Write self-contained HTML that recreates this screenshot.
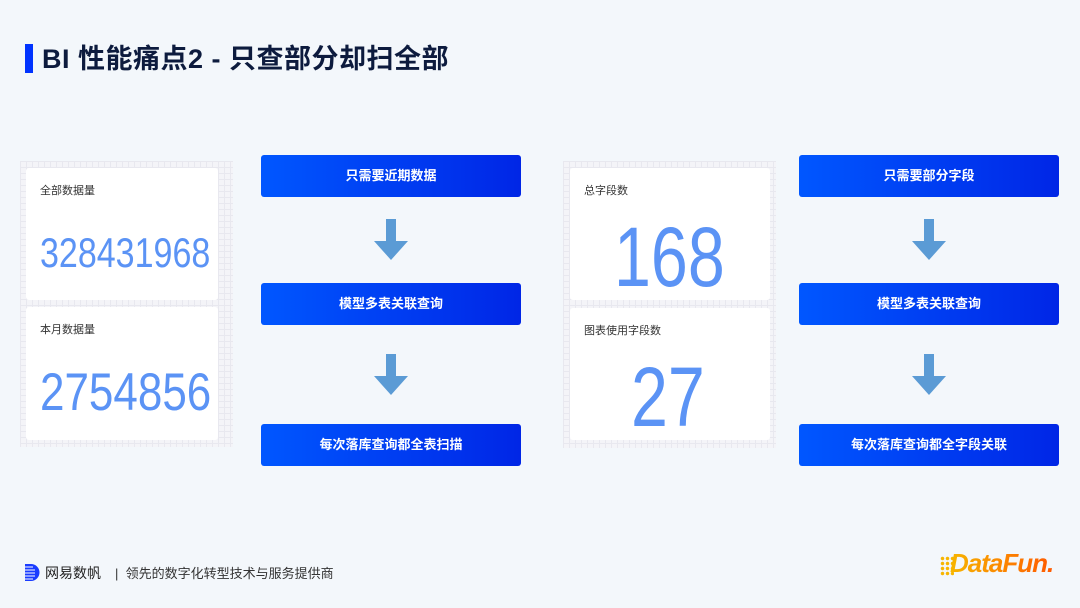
<!DOCTYPE html>
<html><head><meta charset="utf-8"><style>
*{margin:0;padding:0;box-sizing:border-box}
body{width:1080px;height:608px;background:#f3f7fb;position:relative;overflow:hidden;font-family:"Liberation Sans","Noto Sans CJK SC",sans-serif}
.abs{position:absolute}
.grid{position:absolute;background-color:#f4f4f8;background-image:linear-gradient(#e8e8ef 1px,transparent 1px),linear-gradient(90deg,#e8e8ef 1px,transparent 1px);background-size:6px 6px}
.card{position:absolute;background:#fff;border-radius:3px}
.lbl{position:absolute;font-size:11px;color:#333;left:14px;top:14px}
.num{position:absolute;color:#5b93f5;white-space:nowrap;transform-origin:left top;font-family:"Liberation Sans",sans-serif;line-height:1}
.btn{position:absolute;width:260px;height:42px;border-radius:3px;background:linear-gradient(90deg,#0057ff,#0026e6);color:#fff;font-weight:bold;font-size:13px;text-align:center;line-height:42px}
</style></head><body>
<div class="abs" style="left:25px;top:44px;width:8px;height:29px;background:#0033ff"></div>
<div class="abs" style="left:42px;top:41px;font-size:27px;font-weight:bold;color:#0d1b3e;line-height:36px;letter-spacing:0.5px">BI 性能痛点2 - 只查部分却扫全部</div>

<div class="grid" style="left:20px;top:161px;width:213px;height:286px"></div>
<div class="card" style="left:26px;top:168px;width:192px;height:132px"><div class="lbl">全部数据量</div></div>
<div class="card" style="left:26px;top:307px;width:192px;height:133px"><div class="lbl">本月数据量</div></div>
<div class="num" style="left:40px;top:232px;font-size:42px;transform:scaleX(.81)">328431968</div>
<div class="num" style="left:40px;top:366px;font-size:53px;transform:scaleX(.83)">2754856</div>

<div class="grid" style="left:563px;top:161px;width:213px;height:287px"></div>
<div class="card" style="left:570px;top:168px;width:200px;height:132px"><div class="lbl">总字段数</div></div>
<div class="card" style="left:570px;top:308px;width:200px;height:132px"><div class="lbl">图表使用字段数</div></div>
<div class="num" style="left:614px;top:215px;font-size:84px;transform:scaleX(.79)">168</div>
<div class="num" style="left:631px;top:355px;font-size:84px;transform:scaleX(.79)">27</div>

<div class="btn" style="left:261px;top:155px">只需要近期数据</div>
<div class="btn" style="left:261px;top:283px">模型多表关联查询</div>
<div class="btn" style="left:261px;top:424px">每次落库查询都全表扫描</div>
<div class="btn" style="left:799px;top:155px">只需要部分字段</div>
<div class="btn" style="left:799px;top:283px">模型多表关联查询</div>
<div class="btn" style="left:799px;top:424px">每次落库查询都全字段关联</div>

<svg class="abs" style="left:0;top:0" width="1080" height="608">
<g fill="#5b9bd5">
<path d="M386 219h10v22h12l-17 19l-17-19h12z"/>
<path d="M386 354h10v22h12l-17 19l-17-19h12z"/>
<path d="M924 219h10v22h12l-17 19l-17-19h12z"/>
<path d="M924 354h10v22h12l-17 19l-17-19h12z"/>
</g>
<path d="M25 564h6a8 8 0 0 1 0 17h-6z" fill="#1a3cff"/>
<g stroke="#fff" stroke-width="1"><path d="M25 567h8M25 570h10M25 573h10M25 576h10M25 579h8"/></g>
</svg>
<div class="abs" style="left:45px;top:564px;font-size:14px;color:#222;line-height:18px">网易数帆</div>
<div class="abs" style="left:115px;top:565px;font-size:13px;color:#333;line-height:17px">|&nbsp; 领先的数字化转型技术与服务提供商</div>
<div class="abs" style="left:940px;top:556px;width:14px;height:20px;background:radial-gradient(circle,#f7b500 1.5px,transparent 2px) 0 0/5px 5px"></div>
<div class="abs" style="left:950px;top:547px;font-size:26px;font-weight:bold;font-style:italic;line-height:32px;letter-spacing:-1px;background:linear-gradient(90deg,#f7b500,#ff5a00);-webkit-background-clip:text;color:transparent">DataFun.</div>
</body></html>
